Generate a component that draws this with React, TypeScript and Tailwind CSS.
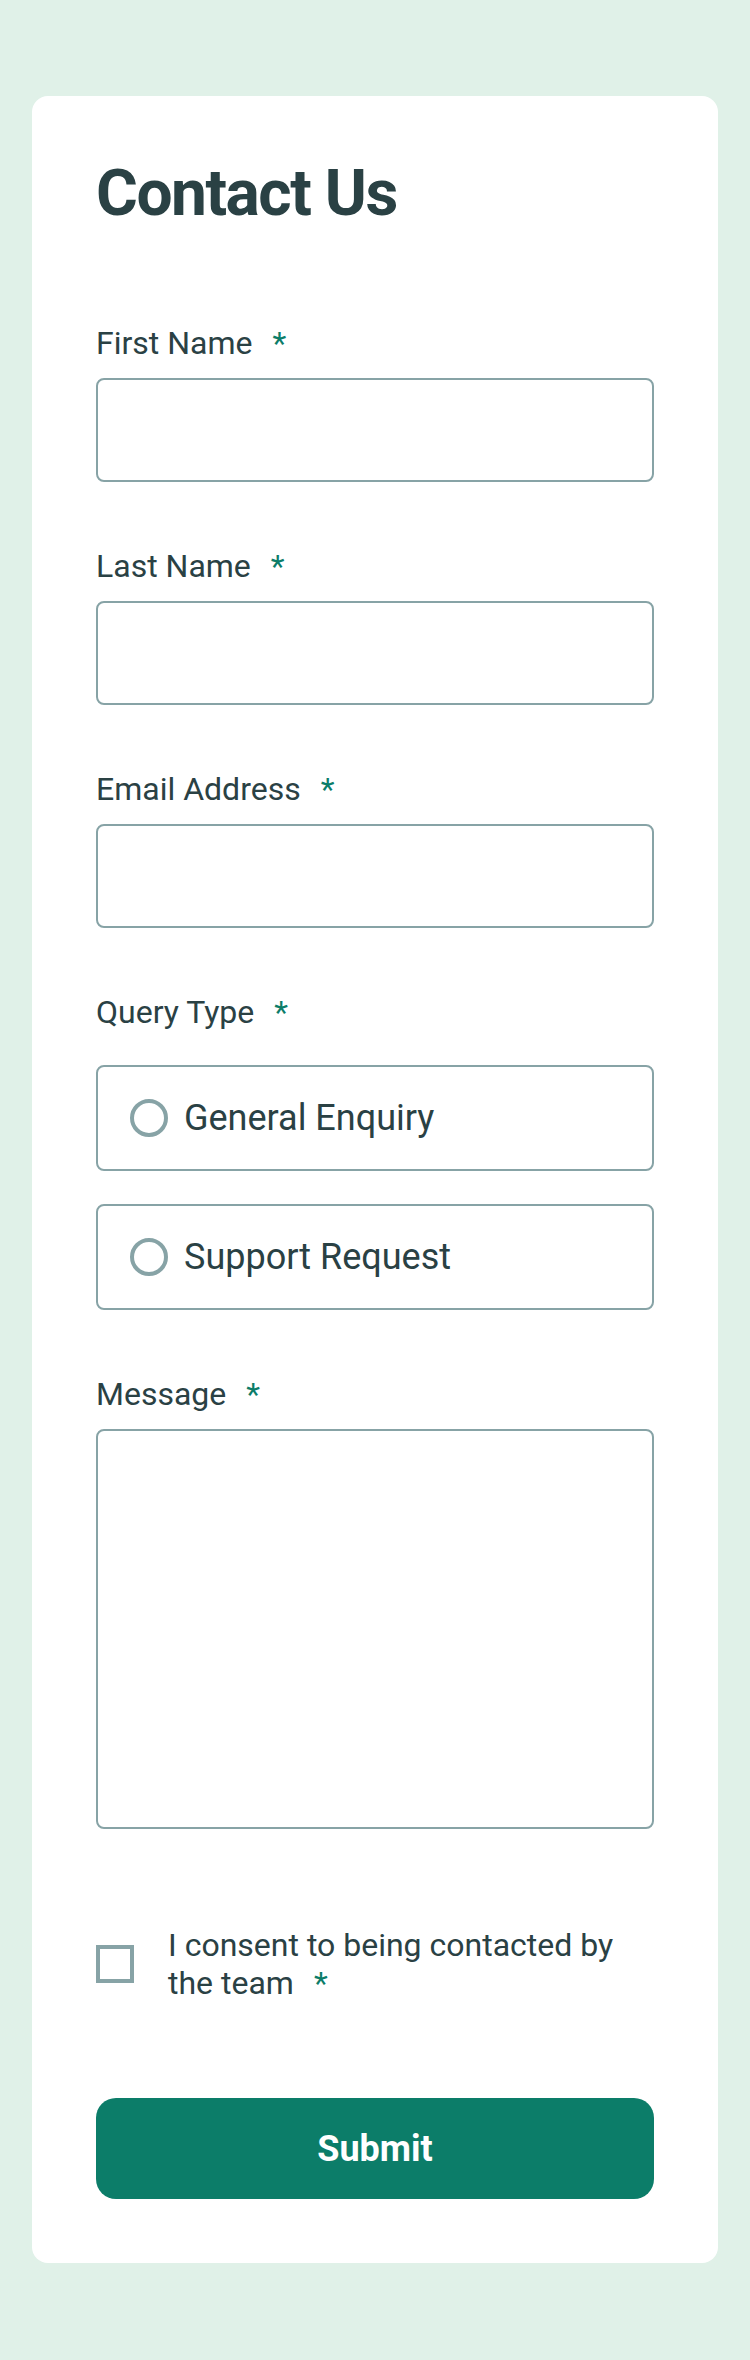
import { useState } from "react";

const textFields = [
  { id: "firstName", label: "First Name", type: "text" },
  { id: "lastName", label: "Last Name", type: "text" },
  { id: "email", label: "Email Address", type: "email" },
];

const queryTypes = [
  { id: "general", label: "General Enquiry" },
  { id: "support", label: "Support Request" },
];

function Label({ htmlFor, children }: { htmlFor?: string; children: React.ReactNode }) {
  return (
    <label
      htmlFor={htmlFor}
      className="flex h-[38px] items-start text-[32px] leading-[38px] text-[#2a4144]"
    >
      {children}
      <span className="ml-5 text-[#0c7d69]">*</span>
    </label>
  );
}

export default function App() {
  const [query, setQuery] = useState("");
  const [consent, setConsent] = useState(false);

  return (
    <div className="bg-[#e0f1e8] px-8 pt-24 pb-[97px] font-[Roboto,sans-serif]">
      <form
        className="flex flex-col rounded-2xl bg-white px-16 pt-[66px] pb-16"
        onSubmit={(e) => e.preventDefault()}
      >
        <h1 className="text-[64px] leading-none font-bold tracking-[-1.5px] text-[#2a4144]">
          Contact Us
        </h1>

        <div className="mt-[98px] flex flex-col gap-[65px]">
          {textFields.map((f) => (
            <div key={f.id} className="flex flex-col gap-4">
              <Label htmlFor={f.id}>{f.label}</Label>
              <input
                id={f.id}
                type={f.type}
                className="h-[104px] w-full rounded-lg border-2 border-[#87a3a6] px-8 text-[32px] text-[#2a4144] outline-none"
              />
            </div>
          ))}

          <div className="flex flex-col">
            <Label>Query Type</Label>
            <div className="mt-[34px] flex flex-col gap-[33px]">
              {queryTypes.map((q) => (
                <label
                  key={q.id}
                  className="flex h-[106px] items-center gap-4 rounded-lg border-2 border-[#87a3a6] px-8 cursor-pointer"
                >
                  <input
                    type="radio"
                    name="query"
                    checked={query === q.id}
                    onChange={() => setQuery(q.id)}
                    className="h-[38px] w-[38px] shrink-0 appearance-none rounded-full border-4 border-[#87a3a6] checked:border-[#0c7d69]"
                  />
                  <span className="text-[36px] leading-none text-[#2a4144]">{q.label}</span>
                </label>
              ))}
            </div>
          </div>

          <div className="flex flex-col gap-4">
            <Label htmlFor="message">Message</Label>
            <textarea
              id="message"
              className="h-[400px] w-full resize-none rounded-lg border-2 border-[#87a3a6] p-8 text-[32px] text-[#2a4144] outline-none"
            />
          </div>
        </div>

        <label className="mt-[97px] flex items-center gap-[34px] cursor-pointer">
          <input
            type="checkbox"
            checked={consent}
            onChange={(e) => setConsent(e.target.checked)}
            className="h-[38px] w-[38px] shrink-0 appearance-none border-4 border-[#87a3a6] checked:bg-[#0c7d69]"
          />
          <div className="flex flex-col text-[32px] leading-[38px] text-[#2a4144]">
            <span>I consent to being contacted by</span>
            <div className="flex">
              <span>the team</span>
              <span className="ml-5 text-[#0c7d69]">*</span>
            </div>
          </div>
        </label>

        <button
          type="submit"
          className="mt-24 h-[101px] w-full rounded-[20px] bg-[#0c7d69] text-[36px] font-bold text-white"
        >
          Submit
        </button>
      </form>
    </div>
  );
}
